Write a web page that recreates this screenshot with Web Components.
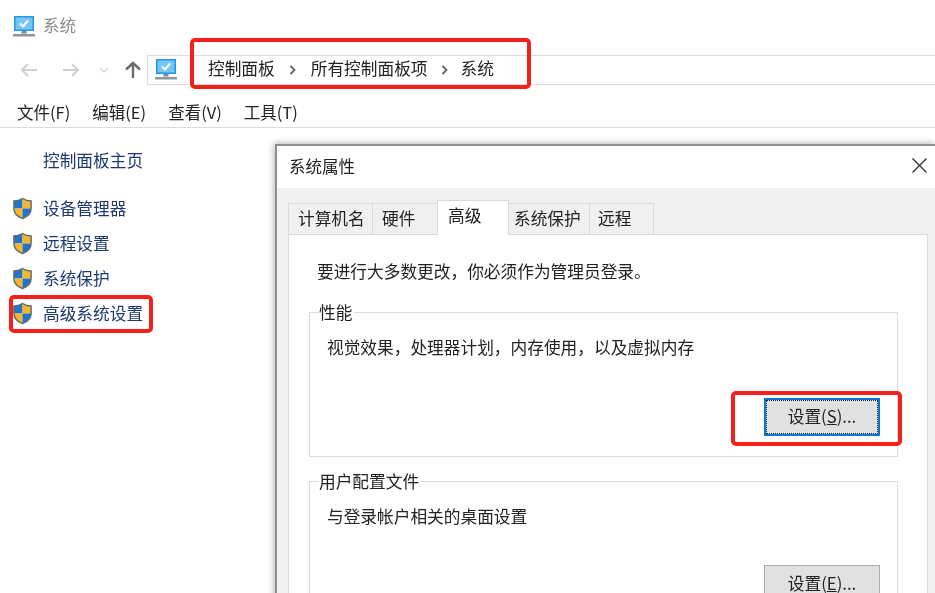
<!DOCTYPE html>
<html lang="zh">
<head>
<meta charset="utf-8">
<title>系统</title>
<style>
  html, body { margin: 0; padding: 0; background: #fff; }
  body { width: 935px; height: 593px; overflow: hidden; font-family: "Noto Sans CJK SC", "Liberation Sans", sans-serif; }
</style>
</head>
<body>
<template id="pc-tpl">
  <style>:host { display: inline-flex; } svg { display: block; }</style>
  <svg viewBox="0 0 22 22" width="22" height="22">
    <rect x="1" y="0" width="20" height="15" fill="#2496e6"/>
    <rect x="2.500" y="1.500" width="17" height="12" fill="#74c6f8"/>
    <path d="M7 7.500l3 3 5-6" fill="none" stroke="#fff" stroke-width="2"/>
    <rect x="8.500" y="15" width="5" height="2.500" fill="#7e8b96"/>
    <rect x="0" y="18" width="22" height="2.500" fill="#8d98a3"/>
  </svg>
</template>
<template id="shield-tpl">
  <style>:host { display: inline-flex; } svg { display: block; }</style>
  <svg viewBox="0 0 22 24" width="21" height="23">
    <defs><clipPath id="s"><path d="M11 1.500C8 3.500 5 4.200 2 4.200V12c0 5 3.600 8.500 9 10.500 5.400-2 9-5.500 9-10.500V4.200c-3 0-6-.7-9-2.700z"/></clipPath></defs>
    <g clip-path="url(#s)">
      <rect width="11" height="12" fill="#1f74cc"/>
      <rect x="11" width="11" height="12" fill="#f7b52a"/>
      <rect y="12" width="11" height="12" fill="#f7b52a"/>
      <rect x="11" y="12" width="11" height="12" fill="#1f74cc"/>
    </g>
    <path d="M11 1.500C8 3.500 5 4.200 2 4.200V12c0 5 3.600 8.500 9 10.500 5.400-2 9-5.500 9-10.500V4.200c-3 0-6-.7-9-2.700z" fill="none" stroke="#5f6a70" stroke-width="1.500"/>
  </svg>
</template>

<sys-page></sys-page>

<script>
function fromTpl(el, id) {
  el.attachShadow({ mode: 'open' });
  el.shadowRoot.appendChild(document.getElementById(id).content.cloneNode(true));
}

class PcIcon extends HTMLElement {
  constructor() { super(); fromTpl(this, 'pc-tpl'); }
}
class ShieldIcon extends HTMLElement {
  constructor() { super(); fromTpl(this, 'shield-tpl'); }
}

// red marker drawn over the screenshot
class RedMark extends HTMLElement {
  constructor() {
    super();
    this.attachShadow({ mode: 'open' });
    this.shadowRoot.innerHTML = `<style>
      :host { position: absolute; box-sizing: border-box; border: 4px solid #f5201c; border-radius: 5px; pointer-events: none; }
    </style>`;
  }
  connectedCallback() {
    const [x, y, w, h] = this.getAttribute('box').split(' ');
    this.style.cssText = `left:${x}px;top:${y}px;width:${w}px;height:${h}px`;
  }
}

class NavBar extends HTMLElement {
  constructor() {
    super();
    this.attachShadow({ mode: 'open' });
    this.shadowRoot.innerHTML = `<style>
      :host { display: flex; align-items: center; height: 32px; margin-top: 16px; padding-left: 20px; }
      svg { display: block; }
      .addr { display: flex; align-items: center; flex: 1; height: 30px; margin-left: 5px; padding-left: 7px;
        border: 1px solid #dcdcdc; border-right: 0; box-sizing: border-box; font-size: 16.700px; color: #222; }
      .crumbs { display: flex; align-items: center; margin-left: 31px; padding-bottom: 4px; }
    </style>
    <svg width="18" height="16" viewBox="0 0 18 16" fill="none" stroke="#cfcfcf" stroke-width="2"><path d="M17 8H2M8 2L2 8l6 6"/></svg>
    <svg style="margin-left:24px" width="18" height="16" viewBox="0 0 18 16" fill="none" stroke="#cfcfcf" stroke-width="2"><path d="M1 8h15M10 2l6 6-6 6"/></svg>
    <svg style="margin-left:19px" width="10" height="6" viewBox="0 0 10 6" fill="none" stroke="#d6d6d6" stroke-width="1.500"><path d="M1 1l4 4 4-4"/></svg>
    <svg style="margin-left:15px" width="18" height="18" viewBox="0 0 18 18" fill="none" stroke="#6b6b6b" stroke-width="2.400"><path d="M9 17V2M2 8.500L9 2l7 6.500"/></svg>
    <div class="addr">
      <pc-icon></pc-icon>
      <div class="crumbs"><slot></slot></div>
    </div>`;
  }
}

class CrumbSep extends HTMLElement {
  constructor() {
    super();
    this.attachShadow({ mode: 'open' });
    this.shadowRoot.innerHTML = `<style>
      :host { display: flex; align-items: center; justify-content: center; width: 36px; }
      svg { display: block; margin-top: 4px; }
    </style>
    <svg width="7" height="10" viewBox="0 0 7 10" fill="none" stroke="#666" stroke-width="1.800"><path d="M1.500 1l4 4-4 4"/></svg>`;
  }
}

class MenuBar extends HTMLElement {
  constructor() {
    super();
    this.attachShadow({ mode: 'open' });
    this.shadowRoot.innerHTML = `<style>
      :host { display: flex; gap: 22px; height: 31px; margin-top: 10px; padding-left: 17px; align-items: center;
        border-bottom: 1px solid #dcdcdc; font-size: 16.500px; color: #222; }
    </style><slot></slot>`;
  }
}

class SideLink extends HTMLElement {
  constructor() {
    super();
    this.attachShadow({ mode: 'open' });
    this.shadowRoot.innerHTML = `<style>
      :host { display: flex; align-items: center; height: 35px; font-size: 16.700px; color: #1c3a70; }
      .ic { width: 43px; padding-left: 12px; margin-top: 2px; box-sizing: border-box; display: flex; }
    </style><div class="ic"><slot name="icon"></slot></div><slot></slot>`;
  }
}

class TabStrip extends HTMLElement {
  constructor() {
    super();
    this.attachShadow({ mode: 'open' });
    this.shadowRoot.innerHTML = `<style>
      :host { display: flex; align-items: flex-end; height: 34px; margin-top: 13px; margin-left: 1px; position: relative; z-index: 1; margin-bottom: -1px; }
    </style><slot></slot>`;
  }
}

class TabItem extends HTMLElement {
  constructor() {
    super();
    this.attachShadow({ mode: 'open' });
    this.shadowRoot.innerHTML = `<style>
      :host { display: flex; align-items: center; box-sizing: border-box; height: 32px; padding: 0 0 2px 9px; white-space: nowrap;
        background: #f0f0f0; border: 1px solid #dadada; margin-left: -1px; font-size: 16.700px; color: #222; }
      :host([active]) { height: 35px; background: #fff; border-bottom-color: #fff; padding-left: 10px; padding-bottom: 6px; position: relative; z-index: 1; }
    </style><slot></slot>`;
  }
  connectedCallback() { this.style.width = this.getAttribute('w') + 'px'; }
}

class GroupBox extends HTMLElement {
  constructor() {
    super();
    this.attachShadow({ mode: 'open' });
    this.shadowRoot.innerHTML = `<style>
      :host { display: flex; flex-direction: column; box-sizing: border-box; position: relative; flex: none;
        border: 1px solid #dcdcdc; padding: 23px 17px 0 17px; font-size: 16.700px; color: #222; }
      .legend { position: absolute; left: 9px; top: -12px; background: #fff; line-height: 22px; padding-right: 2px; }
      .desc { line-height: 22px; white-space: nowrap; }
      .act { margin-top: auto; display: flex; justify-content: flex-end; }
    </style>
    <div class="legend"></div>
    <div class="desc"><slot></slot></div>
    <div class="act"><slot name="action"></slot></div>`;
  }
  connectedCallback() {
    this.shadowRoot.querySelector('.legend').textContent = this.getAttribute('legend');
  }
}

class WinButton extends HTMLElement {
  constructor() {
    super();
    this.attachShadow({ mode: 'open' });
    this.shadowRoot.innerHTML = `<style>
      :host { display: flex; align-items: center; justify-content: center; box-sizing: border-box; width: 116px; height: 38px; padding-bottom: 2px;
        background: #e1e1e1; border: 1px solid #adadad; font-size: 16.700px; color: #222; }
      :host([focused]) { border: 2px solid #0a78d0; outline: 1px dotted #222; outline-offset: -3px; }
      u { text-underline-offset: 2px; }
    </style><slot></slot>`;
  }
}

class SysDialog extends HTMLElement {
  constructor() {
    super();
    this.attachShadow({ mode: 'open' });
    this.shadowRoot.innerHTML = `<style>
      :host { display: flex; flex-direction: column; flex: 1; min-width: 0; height: 467px; margin-top: 16px; background: #f0f0f0;
        border: solid #8e8e8e; border-width: 2px 0 0 2px; box-shadow: -2px 0 6px rgba(0,0,0,.18), 0 -2px 6px rgba(0,0,0,.12); color: #222; }
      .title { display: flex; align-items: center; justify-content: space-between; box-sizing: border-box; height: 42px; flex: none; padding: 0 8px 3px 12px;
        background: #fff; font-size: 16.500px; }
      .body { display: flex; flex-direction: column; padding: 0 7px 0 11px; flex: 1; min-height: 0; }
      .panel { background: #fff; border: 1px solid #dcdcdc; flex: 1; min-height: 0; padding: 24px 29px 0 20px; display: flex; flex-direction: column; }
      svg { display: block; }
    </style>
    <div class="title"><span>系统属性</span>
      <svg width="15" height="15" viewBox="0 0 15 15" fill="none" stroke="#333" stroke-width="1.400"><path d="M.5.5l14 14M14.500.5l-14 14"/></svg>
    </div>
    <div class="body">
      <slot name="tabs"></slot>
      <div class="panel"><slot></slot></div>
    </div>`;
  }
}

class SysPage extends HTMLElement {
  constructor() {
    super();
    this.attachShadow({ mode: 'open' });
    this.shadowRoot.innerHTML = `<style>
      :host { display: flex; flex-direction: column; position: relative; width: 935px; height: 593px; overflow: hidden;
        font-family: "Noto Sans CJK SC", "Liberation Sans", sans-serif; filter: blur(.5px); background: #fff; }
      .top { display: flex; align-items: center; gap: 8px; height: 22px; margin-top: 16px; padding-left: 13px; font-size: 16.500px; color: #8a8a8a; }
      .top span { padding-bottom: 4px; }
      .main { display: flex; flex: 1; min-height: 0; }
      .side { width: 275px; flex: none; padding-top: 14px; }
      .home { margin-bottom: 13px; }
      p { margin: 0 0 29px 8px; font-size: 16.700px; line-height: 24px; white-space: nowrap; }
    </style>
    <div class="top"><pc-icon></pc-icon><span>系统</span></div>
    <nav-bar>
      <span>控制面板</span><crumb-sep></crumb-sep>
      <span>所有控制面板项</span><crumb-sep style="width:33px"></crumb-sep>
      <span>系统</span>
    </nav-bar>
    <menu-bar><span>文件(F)</span><span>编辑(E)</span><span>查看(V)</span><span>工具(T)</span></menu-bar>
    <div class="main">
      <div class="side">
        <side-link class="home"><span>控制面板主页</span></side-link>
        <side-link><shield-icon slot="icon"></shield-icon><span>设备管理器</span></side-link>
        <side-link><shield-icon slot="icon"></shield-icon><span>远程设置</span></side-link>
        <side-link><shield-icon slot="icon"></shield-icon><span>系统保护</span></side-link>
        <side-link><shield-icon slot="icon"></shield-icon><span>高级系统设置</span></side-link>
      </div>
      <sys-dialog>
        <tab-strip slot="tabs">
          <tab-item w="85">计算机名</tab-item>
          <tab-item w="66">硬件</tab-item>
          <tab-item w="72" active>高级</tab-item>
          <tab-item w="82" style="padding-left:5px">系统保护</tab-item>
          <tab-item w="65" style="padding-left:8px">远程</tab-item>
        </tab-strip>
        <p>要进行大多数更改，你必须作为管理员登录。</p>
        <group-box legend="性能" style="height:145px;padding-bottom:20px">
          <span>视觉效果，处理器计划，内存使用，以及虚拟内存</span>
          <win-button slot="action" focused>设置(<u>S</u>)...</win-button>
        </group-box>
        <group-box legend="用户配置文件" style="height:140px;margin-top:24px;padding-bottom:17px">
          <span>与登录帐户相关的桌面设置</span>
          <win-button slot="action">设置(<u>E</u>)...</win-button>
        </group-box>
      </sys-dialog>
    </div>
    <red-mark box="190 38 341 51"></red-mark>
    <red-mark box="9 295 144 38"></red-mark>
    <red-mark box="731 391 171 55"></red-mark>`;
  }
}

customElements.define('pc-icon', PcIcon);
customElements.define('shield-icon', ShieldIcon);
customElements.define('red-mark', RedMark);
customElements.define('nav-bar', NavBar);
customElements.define('crumb-sep', CrumbSep);
customElements.define('menu-bar', MenuBar);
customElements.define('side-link', SideLink);
customElements.define('tab-strip', TabStrip);
customElements.define('tab-item', TabItem);
customElements.define('group-box', GroupBox);
customElements.define('win-button', WinButton);
customElements.define('sys-dialog', SysDialog);
customElements.define('sys-page', SysPage);
</script>
</body>
</html>
